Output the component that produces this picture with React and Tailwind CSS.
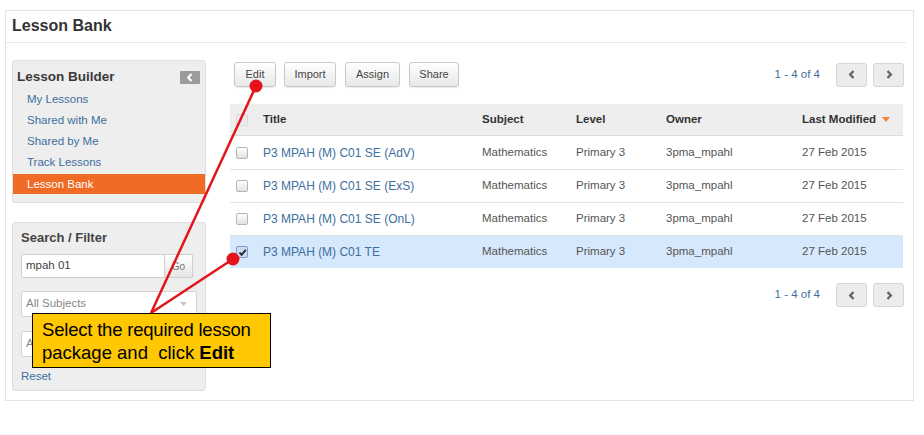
import React from "react";

const F = { fontFamily: '"Liberation Sans", Arial, sans-serif' };

function Chevron({ dir = "left", className = "", color = "#666", w = 2.4 }) {
  return (
    <svg width="8" height="9" viewBox="0 0 8 9" className={className}>
      {dir === "left" ? (
        <path d="M5.5 1 L2.2 4.5 L5.5 8" fill="none" stroke={color} strokeWidth={w} />
      ) : (
        <path d="M2.5 1 L5.8 4.5 L2.5 8" fill="none" stroke={color} strokeWidth={w} />
      )}
    </svg>
  );
}

function Btn({ children, w }) {
  return (
    <div
      className={`h-[25px] ${w} flex items-center justify-center rounded-[3px] border border-[#c8c8c8] bg-gradient-to-b from-white to-[#e8e8e8] text-[11px] text-[#444] shadow-[0_1px_1px_rgba(0,0,0,0.08)]`}
    >
      {children}
    </div>
  );
}

function Pager() {
  return (
    <div className="flex items-center">
      <span className="text-[11.5px] text-[#3d6f9e] mr-[16px]">1 - 4 of 4</span>
      <div className="w-[31px] h-[24px] rounded-[3px] border border-[#d6d6d6] bg-[#ececec] flex items-center justify-center">
        <Chevron dir="left" />
      </div>
      <div className="w-[31px] h-[24px] ml-[6px] rounded-[3px] border border-[#d6d6d6] bg-[#ececec] flex items-center justify-center">
        <Chevron dir="right" />
      </div>
    </div>
  );
}

function Check({ checked, faded }) {
  if (checked) {
    return (
      <div className="w-[12px] h-[12px] rounded-[2px] border border-[#7d9cc7] bg-[#c9dcf3] flex items-center justify-center">
        <svg width="9" height="9" viewBox="0 0 9 9">
          <path d="M1.5 4.5 L3.6 6.8 L7.8 1.8" fill="none" stroke="#222" strokeWidth="1.8" />
        </svg>
      </div>
    );
  }
  return (
    <div
      className={`w-[12px] h-[12px] rounded-[2px] border ${
        faded ? "border-[#dcdcdc] bg-[#ececec]" : "border-[#b5b5b5] bg-gradient-to-b from-white to-[#e2e2e2]"
      }`}
    />
  );
}

const rows = [
  { t: "P3 MPAH (M) C01 SE (AdV)" },
  { t: "P3 MPAH (M) C01 SE (ExS)" },
  { t: "P3 MPAH (M) C01 SE (OnL)" },
  { t: "P3 MPAH (M) C01 TE", sel: true },
];

export default function App() {
  return (
    <div className="relative w-[924px] h-[435px] bg-white overflow-hidden" style={F}>
      <div className="absolute left-0 top-0 w-full h-full pt-[10px] pl-[5px]">
        <div className="w-[909px] h-[391px] border border-[#e4e4e4] bg-white">
          {/* header */}
          <div className="h-[32px] mr-[7px] border-b border-[#e8e8e8] pl-[6px] flex items-center">
            <span className="text-[16px] font-bold text-[#333] mt-[-1px]">Lesson Bank</span>
          </div>
          <div className="flex pl-[6px] pt-[17px]">
            {/* sidebar */}
            <div className="w-[194px] flex flex-col">
              <div className="rounded-[3px] border border-[#dedede] bg-[#eeeeee] pt-[7px] pb-[8px]">
                <div className="h-[18px] flex items-center justify-between pl-[4px] pr-[5px]">
                  <span className="text-[13.5px] font-bold text-[#3a3a3a]">Lesson Builder</span>
                  <div className="w-[20px] h-[13px] rounded-[1px] bg-[#9b9b9b] flex items-center justify-center">
                    <Chevron dir="left" color="#fff" w={2.2} />
                  </div>
                </div>
                <div className="mt-[3px] text-[11.5px] text-[#3d6f9e]">
                  <div className="h-[21px] leading-[21px] pl-[14px]">My Lessons</div>
                  <div className="h-[21px] leading-[21px] pl-[14px]">Shared with Me</div>
                  <div className="h-[21px] leading-[21px] pl-[14px]">Shared by Me</div>
                  <div className="h-[21px] leading-[21px] pl-[14px]">Track Lessons</div>
                  <div className="h-[20px] leading-[20px] pl-[14px] mt-[1px] bg-[#ef6a25] text-white">Lesson Bank</div>
                </div>
              </div>
              <div className="mt-[19px] h-[169px] rounded-[3px] border border-[#dedede] bg-[#eeeeee] pt-[6px] px-[8px]">
                <div className="h-[18px] flex items-center">
                  <span className="text-[13px] font-bold text-[#444]">Search / Filter</span>
                </div>
                <div className="mt-[7px] flex h-[24px]">
                  <div className="w-[144px] h-full border border-[#cfcfcf] bg-white rounded-l-[2px] flex items-center pl-[4px] text-[11.5px] text-[#444]">
                    mpah 01
                  </div>
                  <div className="w-[28px] h-full border border-l-0 border-[#cfcfcf] bg-gradient-to-b from-white to-[#e6e6e6] rounded-r-[2px] flex items-center justify-center text-[10px] text-[#777]">
                    Go
                  </div>
                </div>
                <div className="mt-[13px] w-[176px] h-[26px] border border-[#d3d3d3] bg-white rounded-[2px] flex items-center justify-between pl-[4px] pr-[9px] text-[11.5px] text-[#888]">
                  <span>All Subjects</span>
                  <svg width="7" height="4" viewBox="0 0 7 4"><path d="M0 0 L7 0 L3.5 4 Z" fill="#c4c4c4" /></svg>
                </div>
                <div className="mt-[14px] w-[176px] h-[26px] border border-[#d3d3d3] bg-white rounded-[2px] flex items-center justify-between pl-[4px] pr-[9px] text-[11.5px] text-[#888]">
                  <span>All Levels</span>
                  <svg width="7" height="4" viewBox="0 0 7 4"><path d="M0 0 L7 0 L3.5 4 Z" fill="#c4c4c4" /></svg>
                </div>
                <div className="mt-[10px] h-[20px] flex items-center text-[11.5px] text-[#3d6f9e]">Reset</div>
              </div>
            </div>
            {/* main */}
            <div className="ml-[24px] w-[674px] flex flex-col">
              <div className="flex items-center justify-between h-[25px] mt-[2px]">
                <div className="flex items-center pl-[4px] gap-[8px]">
                  <Btn w="w-[42px]">Edit</Btn>
                  <div className="ml-[0px]"><Btn w="w-[52px]">Import</Btn></div>
                  <div className="ml-[1px]"><Btn w="w-[55px]">Assign</Btn></div>
                  <div className="ml-[1px]"><Btn w="w-[50px]">Share</Btn></div>
                </div>
                <div className="mr-[0px]"><Pager /></div>
              </div>
              {/* table */}
              <div className="mt-[17px] w-[673px] text-[11.5px]">
                <div className="grid grid-cols-[33px_219px_94px_90px_136px_1fr] h-[32px] items-center bg-[#eeeeee] border-b border-[#dcdcdc] font-bold text-[#333]">
                  <div className="pl-[6px]"><Check faded /></div>
                  <div>Title</div>
                  <div>Subject</div>
                  <div>Level</div>
                  <div>Owner</div>
                  <div className="flex items-center">
                    Last Modified
                    <svg width="8" height="5" viewBox="0 0 8 5" className="ml-[6px]"><path d="M0 0 L8 0 L4 5 Z" fill="#f08a3c" /></svg>
                  </div>
                </div>
                {rows.map((r, i) => (
                  <div
                    key={i}
                    className={`grid grid-cols-[33px_219px_94px_90px_136px_1fr] h-[33px] items-center ${
                      i > 0 ? "border-t border-[#e2e2e2]" : ""
                    } ${r.sel ? "bg-[#d6e8fb]" : "bg-white"} text-[#555]`}
                  >
                    <div className="pl-[6px]"><Check checked={r.sel} /></div>
                    <div className="text-[#3d6f9e] text-[12px]">{r.t}</div>
                    <div>Mathematics</div>
                    <div>Primary 3</div>
                    <div>3pma_mpahl</div>
                    <div>27 Feb 2015</div>
                  </div>
                ))}
              </div>
              <div className="mt-[15px] flex justify-end mr-[0px]">
                <Pager />
              </div>
            </div>
          </div>
        </div>
      </div>

      {/* annotation arrows */}
      <svg className="absolute left-0 top-0 pointer-events-none" width="924" height="435" viewBox="0 0 924 435">
        <line x1="256" y1="86" x2="151" y2="313" stroke="#e3141c" strokeWidth="2.5" />
        <line x1="233" y1="259" x2="151" y2="313" stroke="#e3141c" strokeWidth="2.5" />
        <circle cx="256" cy="86" r="6.5" fill="#e3141c" />
        <circle cx="233" cy="259" r="6.5" fill="#e3141c" />
      </svg>

      {/* callout */}
      <div className="absolute left-[32px] top-[313px] w-[239px] h-[55px] bg-[#ffc800] border border-black pl-[9px] pt-[4px] text-[18.5px] leading-[23px] text-black">
        <div className="tracking-[-0.2px]">Select the required lesson</div>
        <div>
          package and&nbsp; click <b>Edit</b>
        </div>
      </div>
    </div>
  );
}
